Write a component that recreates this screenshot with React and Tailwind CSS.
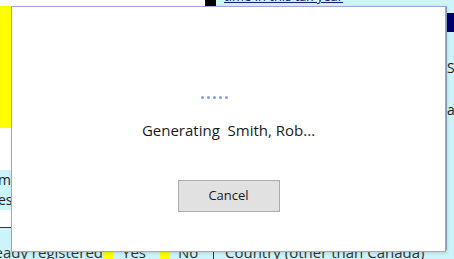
export default function App() {
  return (
    <div className="relative h-[259px] w-[454px] overflow-hidden bg-white font-['Open_Sans',sans-serif]">
      {/* background form, mostly hidden behind the dialog */}
      <div className="flex h-[6px]">
        <div className="w-[205px] bg-white" />
        <div className="w-[11px] bg-black" />
        <div className="flex-1 overflow-hidden bg-[#cdf3fb] text-[13px] leading-[6px] text-[#1a1a6e]">
          <span className="relative -top-[7px] ml-[8px] underline">time in this tax year</span>
        </div>
      </div>
      <div className="flex h-[253px]">
        <div className="flex w-[12px] flex-col">
          <div className="h-[122px] bg-[#ffff00]" />
          <div className="h-[42px] bg-white" />
          <div className="flex h-[40px] flex-col overflow-hidden bg-[#cdf3fb] text-[14px] leading-[20px] text-[#222]">
            <span className="-ml-[2px]">m:</span>
            <span className="-ml-[2px]">es</span>
          </div>
          <div className="h-[18px] border-b border-[#333] bg-white" />
          <div className="flex-1 bg-[#cdf3fb]" />
        </div>
        <div className="flex-1" />
        <div className="flex w-[8px] flex-col border-l border-[#8fa8c8] bg-[#cdf3fb]">
          <div className="mt-[7px] h-[19px] bg-[#00006e]" />
          <div className="mt-[26px] text-[14px] leading-[20px] text-[#222]">S</div>
          <div className="mt-[22px] text-[14px] leading-[20px] text-[#222]">a</div>
        </div>
      </div>
      <div className="absolute bottom-0 left-0 flex h-[9px] w-[454px] items-start overflow-hidden bg-[#cdf3fb] text-[15px] leading-[12px] text-[#333]">
        <span className="-mt-[4px] flex w-[103px] shrink-0 justify-end whitespace-nowrap">
          <span>Already registered</span>
        </span>
        <span className="h-[9px] w-[10px] shrink-0 bg-[#ffff00]" />
        <span className="-mt-[4px] ml-[9px] w-[38px] shrink-0">Yes</span>
        <span className="h-[9px] w-[10px] shrink-0 bg-[#ffff00]" />
        <span className="-mt-[4px] ml-[8px] w-[35px] shrink-0">No</span>
        <span className="h-[9px] shrink-0 border-l border-[#333]" />
        <span className="-mt-[4px] ml-[11px] whitespace-nowrap">Country (other than Canada)</span>
      </div>

      {/* progress dialog */}
      <div className="absolute left-[11px] top-[6px] flex h-[246px] w-[435px] flex-col items-center border border-[#a3a3d6] bg-white shadow-[1px_1px_3px_rgba(0,0,0,0.15)]">
        <div className="mr-[29px] mt-[89px] flex gap-[3px]">
          <span className="h-[3px] w-[3px] rounded-full bg-[#7f9fdd]" />
          <span className="h-[3px] w-[3px] rounded-full bg-[#7f9fdd]" />
          <span className="h-[3px] w-[3px] rounded-full bg-[#7f9fdd]" />
          <span className="h-[3px] w-[3px] rounded-full bg-[#7f9fdd]" />
          <span className="h-[3px] w-[3px] rounded-full bg-[#7f9fdd]" />
        </div>
        <div className="mt-[21px] whitespace-pre text-[15px] leading-[20px] text-[#1a1a1a]">
          Generating  Smith, Rob...
        </div>
        <button className="mt-[40px] h-[32px] w-[102px] border border-[#adadad] bg-[#e1e1e1] text-[13px] text-[#1a1a1a]">
          Cancel
        </button>
      </div>
    </div>
  );
}
